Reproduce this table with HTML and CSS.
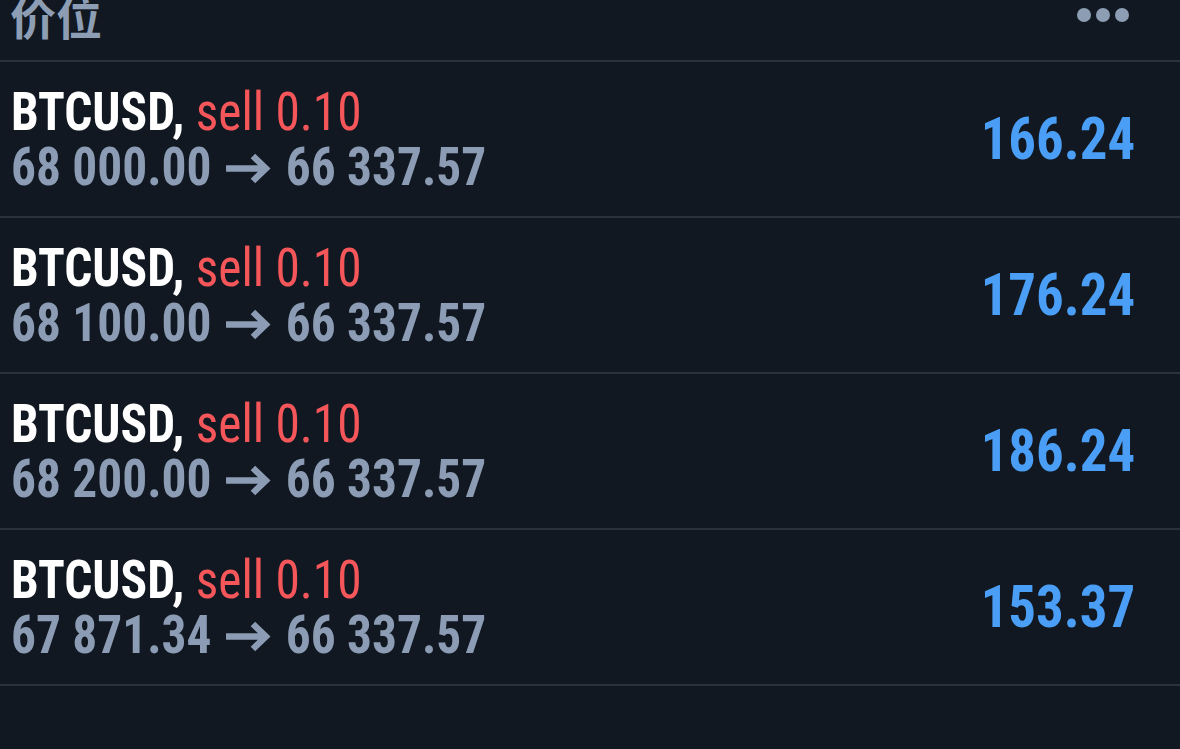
FILE: index.html
```html
<!DOCTYPE html>
<html lang="zh">
<head>
<meta charset="utf-8">
<link rel="stylesheet" href="styles.css">
</head>
<body>
<div class="screen">
  <div class="header">
    <div class="title">价位</div>
    <div class="more"><span class="dot"></span><span class="dot"></span><span class="dot"></span></div>
  </div>
  <div class="row">
    <div class="info">
      <div class="line1"><span class="sym">BTCUSD,</span> <span class="side">sell 0.10</span></div>
      <div class="line2"><span>68 000.00</span><svg class="arrow" viewBox="0 0 45 31" width="49" height="31" preserveAspectRatio="none"><path d="M0 15.5H40M27 3L40 15.5L27 28" fill="none" stroke="currentColor" stroke-width="6.5"/></svg><span>66 337.57</span></div>
    </div>
    <div class="val">166.24</div>
  </div>
  <div class="row">
    <div class="info">
      <div class="line1"><span class="sym">BTCUSD,</span> <span class="side">sell 0.10</span></div>
      <div class="line2"><span>68 100.00</span><svg class="arrow" viewBox="0 0 45 31" width="49" height="31" preserveAspectRatio="none"><path d="M0 15.5H40M27 3L40 15.5L27 28" fill="none" stroke="currentColor" stroke-width="6.5"/></svg><span>66 337.57</span></div>
    </div>
    <div class="val">176.24</div>
  </div>
  <div class="row">
    <div class="info">
      <div class="line1"><span class="sym">BTCUSD,</span> <span class="side">sell 0.10</span></div>
      <div class="line2"><span>68 200.00</span><svg class="arrow" viewBox="0 0 45 31" width="49" height="31" preserveAspectRatio="none"><path d="M0 15.5H40M27 3L40 15.5L27 28" fill="none" stroke="currentColor" stroke-width="6.5"/></svg><span>66 337.57</span></div>
    </div>
    <div class="val">186.24</div>
  </div>
  <div class="row">
    <div class="info">
      <div class="line1"><span class="sym">BTCUSD,</span> <span class="side">sell 0.10</span></div>
      <div class="line2"><span>67 871.34</span><svg class="arrow" viewBox="0 0 45 31" width="49" height="31" preserveAspectRatio="none"><path d="M0 15.5H40M27 3L40 15.5L27 28" fill="none" stroke="currentColor" stroke-width="6.5"/></svg><span>66 337.57</span></div>
    </div>
    <div class="val">153.37</div>
  </div>
</div>
</body>
</html>
```
FILE: styles.css
```css
html, body {
  margin: 0;
  padding: 0;
  background: #111821;
}
.screen {
  width: 1180px;
  height: 749px;
  overflow: hidden;
  background: #111821;
  font-family: "Roboto Condensed", Roboto, "Noto Sans CJK SC", sans-serif;
}
.header {
  height: 60px;
  border-bottom: 2px solid #29313d;
  display: flex;
  justify-content: space-between;
  align-items: flex-start;
  padding: 0 45px 0 10px;
}
.title {
  font-family: "Noto Sans CJK SC", sans-serif;
  font-weight: 700;
  font-size: 46px;
  line-height: 46px;
  margin-top: -8px;
  color: #8d9db4;
}
.more {
  display: flex;
  gap: 5px;
  margin-top: 8px;
  margin-right: 6px;
}
.dot {
  width: 14px;
  height: 14px;
  border-radius: 50%;
  background: #8d9db4;
}
.row {
  height: 154px;
  border-bottom: 2px solid #29313d;
  display: flex;
  align-items: center;
  justify-content: space-between;
  padding: 0 45px 0 11px;
}
.info {
  font-weight: 700;
  font-size: 54px;
  line-height: 55px;
  transform: scaleX(0.915);
  transform-origin: left center;
}
.sym { color: #ffffff; }
.side { color: #f4565a; font-weight: 400; }
.line2 {
  color: #8b9cb4;
  display: flex;
  align-items: center;
}
.arrow {
  margin: 3px 16px 0 16px;
  flex: none;
}
.val {
  color: #4a9ef5;
  font-weight: 700;
  font-size: 59px;
  line-height: 60px;
  transform: scaleX(0.93);
  transform-origin: right center;
}
```
